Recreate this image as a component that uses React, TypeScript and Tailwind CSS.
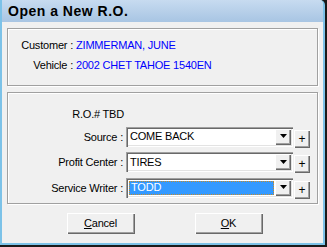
import React from "react";

const raised =
  "shadow-[inset_1px_1px_0_#ffffff,inset_-1px_-1px_0_#696969,inset_-2px_-2px_0_#a0a0a0]";
const sunken =
  "shadow-[inset_1px_1px_0_#a0a0a0,inset_2px_2px_0_#696969,inset_-1px_-1px_0_#ffffff,inset_-2px_-2px_0_#e3e3e3]";

function Combo({ value, focused }: { value: string; focused?: boolean }) {
  return (
    <div className="flex items-start gap-[1px]">
      <div className={`w-[167px] h-[20px] bg-white flex p-[2px] ${sunken}`}>
        <div className="flex-1 flex items-center">
          {focused ? (
            <div className="ml-[1px] mr-[1px] h-[14px] w-full bg-[#3399ff] border border-dotted border-[#c48a2a] flex items-center pl-[1px] text-white">
              {value}
            </div>
          ) : (
            <div className="pl-[2px] text-black">{value}</div>
          )}
        </div>
        <div className={`w-[16px] h-full bg-[#f0f0f0] flex items-center justify-center ${raised}`}>
          <svg width="7" height="5" viewBox="0 0 7 5">
            <path d="M0 0h7L3.5 4z" fill="#000" />
          </svg>
        </div>
      </div>
      <div className={`w-[16px] h-[18px] mt-[3px] bg-[#f0f0f0] flex items-center justify-center text-[12px] leading-none text-black ${raised}`}>
        +
      </div>
    </div>
  );
}

function Row({ label, children }: { label: string; children: React.ReactNode }) {
  return (
    <div className="flex items-center">
      <div className="w-[118px] text-right pr-[3px]">{label}</div>
      {children}
    </div>
  );
}

export default function App() {
  return (
    <div className="w-[327px] h-[247px] bg-[#1a1a1a] font-['Liberation_Sans',Arial,sans-serif] text-[11px] tracking-[-0.2px]">
      <div className="w-[325px] h-[245px] bg-[#f0f0f0] border-x-2 border-b-2 border-[#7cc2e8] rounded-tr-[5px] flex flex-col overflow-hidden">
        <div className="h-[22px] shrink-0 bg-gradient-to-b from-[#c7dbf0] to-[#a8c5e3] flex items-center pl-[6px] text-[14px] font-bold text-black tracking-[0.5px]">
          Open a New R.O.
        </div>
        <div className="flex flex-col px-[5px] pt-[6px]">
          <div className="h-[58px] border border-[#a0a0a0] shadow-[inset_1px_1px_0_#fff,1px_1px_0_#fff] flex flex-col pt-[9px] gap-[6px]">
            <div className="flex items-center h-[14px]">
              <div className="w-[65px] text-right text-black">Customer :</div>
              <div className="pl-[3px] text-[#0000ff]">ZIMMERMAN, JUNE</div>
            </div>
            <div className="flex items-center h-[14px]">
              <div className="w-[65px] text-right text-black">Vehicle :</div>
              <div className="pl-[3px] text-[#0000ff]">2002 CHET TAHOE 1540EN</div>
            </div>
          </div>
          <div className="mt-[6px] h-[112px] border border-[#a0a0a0] shadow-[inset_1px_1px_0_#fff,1px_1px_0_#fff] flex flex-col pt-[13px] gap-[4.5px] text-black">
            <div className="flex items-center h-[16px]">
              <div className="w-[118px] text-right pr-[2px]">R.O.# TBD</div>
            </div>
            <Row label="Source :">
              <Combo value="COME BACK" />
            </Row>
            <Row label="Profit Center :">
              <Combo value="TIRES" />
            </Row>
            <Row label="Service Writer :">
              <Combo value="TODD" focused />
            </Row>
          </div>
          <div className="flex justify-center gap-[60px] mt-[9px] pl-[4px]">
            <button className={`w-[68px] h-[21px] bg-[#f0f0f0] text-black ${raised}`}>
              <span className="underline">C</span>ancel
            </button>
            <button className={`w-[68px] h-[21px] bg-[#f0f0f0] text-black ${raised}`}>
              <span className="underline">O</span>K
            </button>
          </div>
        </div>
      </div>
    </div>
  );
}
